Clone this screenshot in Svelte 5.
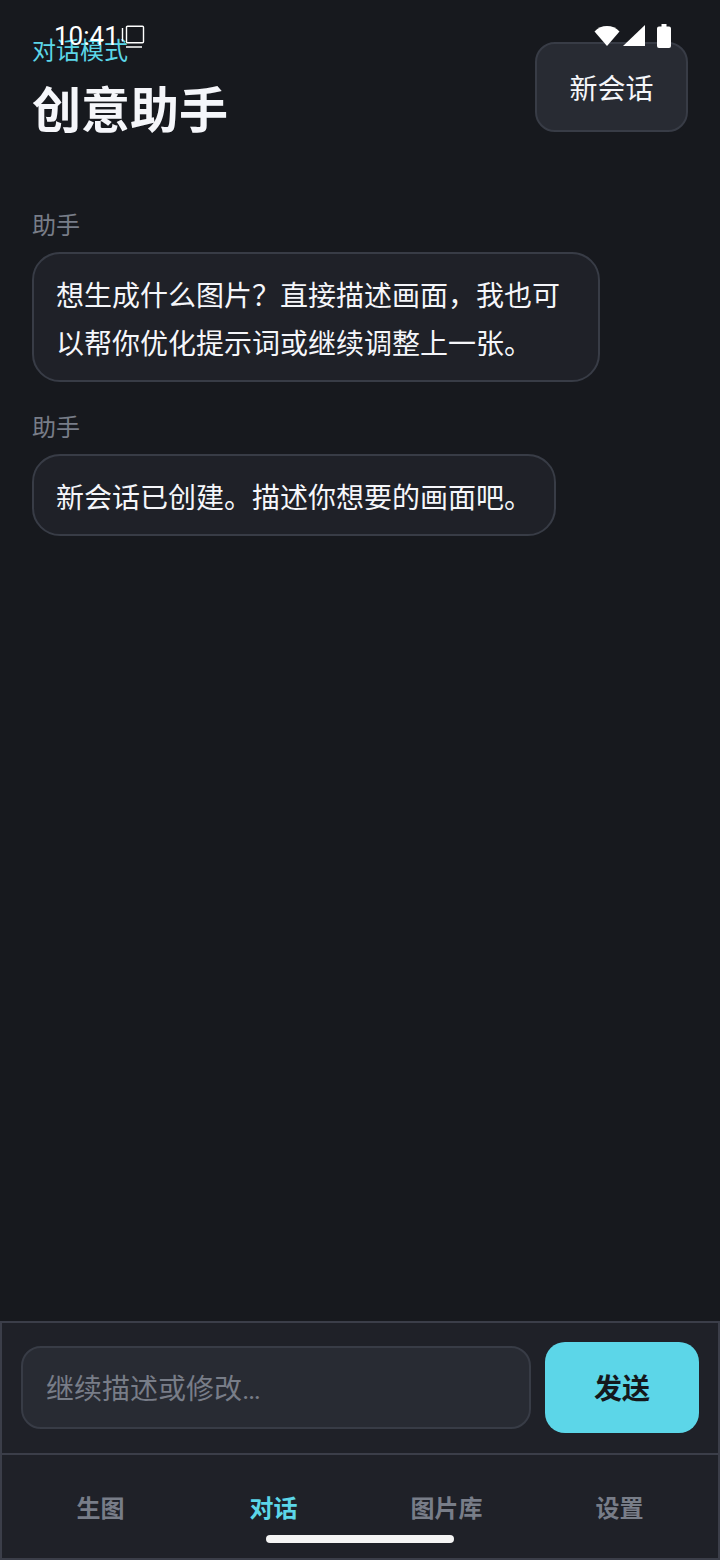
<script>
  const messages = [
    { id: 1, role: "助手", text: "想生成什么图片？直接描述画面，我也可以帮你优化提示词或继续调整上一张。" },
    { id: 2, role: "助手", text: "新会话已创建。描述你想要的画面吧。" },
  ];

  const tabs = [
    { id: "generate", label: "生图" },
    { id: "chat", label: "对话" },
    { id: "gallery", label: "图片库" },
    { id: "settings", label: "设置" },
  ];

  let active = $state("chat");
  let draft = $state("");
</script>

<div class="app">
  <div class="status">
    <div class="status__left">
      <span class="status__time">10:41</span>
      <svg width="24" height="24" viewBox="0 0 24 24" fill="none" stroke="#fff" stroke-width="1.4">
        <rect x="5.5" y="2.200" width="17" height="16.500" rx="1" />
        <path d="M1.500 4v13.500M5 23h16" />
      </svg>
    </div>
    <div class="status__right">
      <svg class="status__wifi" width="26" height="22" viewBox="0 0 26 22" fill="#fff"><path d="M0.500 6.500C4 2.800 8.200 1 13 1s9 1.800 12.500 5.500L13 21z" /></svg>
      <svg class="status__signal" width="22" height="22" viewBox="0 0 22 22" fill="#fff"><path d="M22 0v21H0z" /></svg>
      <svg width="14" height="24" viewBox="0 0 14 24" fill="#fff"><path d="M4.500 0h5v2.500H12a2 2 0 0 1 2 2V22a2 2 0 0 1-2 2H2a2 2 0 0 1-2-2V4.500a2 2 0 0 1 2-2h2.500z" /></svg>
    </div>
  </div>

  <header class="header">
    <div>
      <div class="header__kicker">对话模式</div>
      <h1 class="header__title">创意助手</h1>
    </div>
    <button type="button" class="header__new">新会话</button>
  </header>

  <main class="thread">
    {#each messages as message (message.id)}
      <div class="message">
        <div class="message__role">{message.role}</div>
        <div class="message__bubble">{message.text}</div>
      </div>
    {/each}
  </main>

  <form class="composer" onsubmit={(e) => e.preventDefault()}>
    <input class="composer__input" placeholder="继续描述或修改…" bind:value={draft} />
    <button type="submit" class="composer__send">发送</button>
  </form>

  <nav class="tabs">
    {#each tabs as tab (tab.id)}
      <button type="button" class="tabs__item" class:active={active === tab.id} onclick={() => (active = tab.id)}>
        {tab.label}
      </button>
    {/each}
    <span class="tabs__handle"></span>
  </nav>
</div>

<style>
  :global(body) {
    background: #17191e;
  }

  .app {
    position: relative;
    display: flex;
    flex-direction: column;
    height: 1560px;
    background: #17191e;
    color: #f5f6fa;
    font-family: "Noto Sans CJK SC", Roboto, sans-serif;
    overflow: hidden;
  }

  button,
  input {
    font: inherit;
  }

  .status {
    position: absolute;
    top: 24px;
    left: 54px;
    right: 49px;
    display: flex;
    justify-content: space-between;
    align-items: center;
    pointer-events: none;
  }

  .status__left {
    display: flex;
    align-items: center;
    gap: 2px;
  }

  .status__time {
    font-family: Roboto, sans-serif;
    font-size: 26px;
    line-height: 24px;
    color: #fff;
  }

  .status__right {
    display: flex;
    align-items: center;
  }

  .status__wifi {
    margin-right: 3px;
  }

  .status__signal {
    margin-right: 12px;
  }

  .header {
    display: flex;
    justify-content: space-between;
    align-items: flex-start;
    padding: 32px 32px 0;
  }

  .header__kicker {
    font-size: 24px;
    line-height: 34px;
    color: #5cd6e8;
  }

  .header__title {
    margin: 9px 0 0;
    font-size: 49px;
    line-height: 64px;
    font-weight: 700;
    color: #f5f6fa;
  }

  .header__new {
    margin-top: 10px;
    width: 153px;
    height: 90px;
    padding: 0;
    background: #282b33;
    border: 2px solid #383c46;
    border-radius: 20px;
    color: #f5f6fa;
    font-size: 28px;
  }

  .thread {
    flex: 1;
    display: flex;
    flex-direction: column;
    gap: 28px;
    padding: 69px 32px 0;
  }

  .message__role {
    font-size: 24px;
    line-height: 32px;
    color: #787d88;
    margin-bottom: 12px;
  }

  .message__bubble {
    width: fit-content;
    max-width: 568px;
    box-sizing: border-box;
    padding: 16px 22px 14px;
    background: #1f2128;
    border: 2px solid #383c46;
    border-radius: 28px;
    font-size: 28px;
    line-height: 48px;
    color: #f5f6fa;
  }

  .composer {
    display: flex;
    align-items: center;
    gap: 14px;
    height: 132px;
    box-sizing: border-box;
    padding: 0 19px 2px;
    background: #1f2128;
    border: 2px solid #3b3e49;
    border-bottom: 0;
  }

  .composer__input {
    flex: 1;
    min-width: 0;
    height: 83px;
    box-sizing: border-box;
    padding: 5px 23px 0;
    background: #282b33;
    border: 2px solid #383c46;
    border-radius: 20px;
    color: #f5f6fa;
    font-family: Roboto, "Noto Sans CJK SC", sans-serif;
    font-size: 28px;
    outline: none;
  }

  .composer__input::placeholder {
    color: #787d88;
    opacity: 1;
  }

  .composer__send {
    width: 154px;
    height: 91px;
    flex: none;
    padding: 0;
    background: #5cd6e8;
    border: 0;
    border-radius: 20px;
    color: #14181c;
    font-size: 28px;
    font-weight: 700;
  }

  .tabs {
    position: relative;
    display: grid;
    grid-template-columns: repeat(4, 1fr);
    align-items: start;
    height: 107px;
    box-sizing: border-box;
    padding: 0 12px;
    background: #1f2128;
    border: 2px solid #3b3e49;
  }

  .tabs__item {
    padding: 34px 0 0;
    background: none;
    border: 0;
    color: #787d88;
    font-size: 24px;
    line-height: 36px;
    font-weight: 700;
  }

  .tabs__item.active {
    color: #5cd6e8;
  }

  .tabs__handle {
    position: absolute;
    left: 264px;
    bottom: 15px;
    width: 188px;
    height: 8px;
    border-radius: 4px;
    background: #f5f5f5;
  }
</style>
